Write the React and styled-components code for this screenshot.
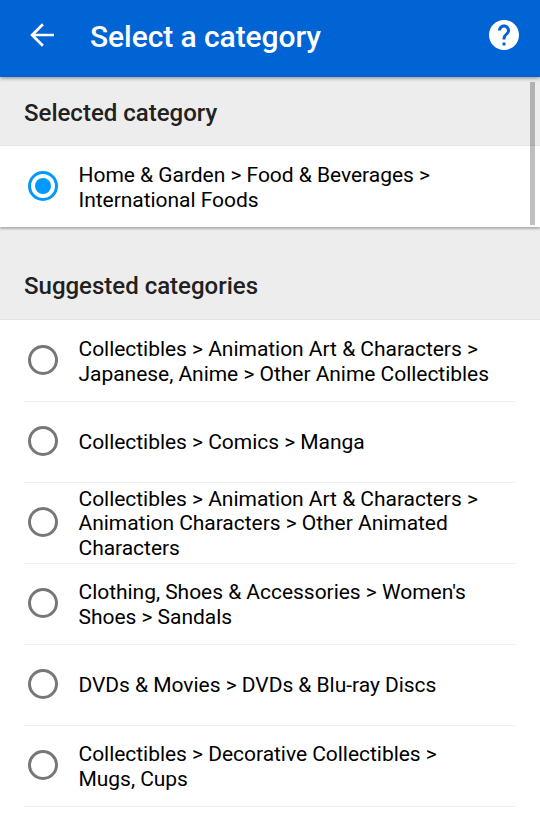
import React from 'react';
import styled, { createGlobalStyle } from 'styled-components';

const Global = createGlobalStyle`
  * { box-sizing: border-box; }
  body { margin: 0; background: #fff; font-family: Roboto, sans-serif; overflow: hidden; }
`;
const Screen = styled.main`
  position: relative;
  width: 540px;
  height: 813px;
  overflow: hidden;
  background: #fff;
  color: #000;
`;
const Header = styled.header`
  position: relative;
  z-index: 1;
  display: flex;
  align-items: center;
  height: 77px;
  padding: 0 18px 7px 28px;
  background: #0064d4;
  color: #fff;
  box-shadow: 0 1px 4px rgba(0, 0, 0, 0.45);
`;
const Title = styled.h1`
  flex: 1;
  margin: 0 0 0 34px;
  padding-top: 3px;
  font-size: 30px;
  font-weight: 500;
  line-height: 36px;
  letter-spacing: -0.08px;
  white-space: nowrap;
`;
const SectionTitle = styled.h2`
  display: flex;
  align-items: flex-end;
  height: ${(p) => (p.$spaced ? 93 : 69)}px;
  margin: 0;
  padding: 0 24px ${(p) => (p.$spaced ? 18 : 17)}px;
  border-bottom: 1px solid #e4e4e4;
  background: #ededed;
  color: #212121;
  font-size: 24px;
  font-weight: 500;
  line-height: 30px;
`;
const List = styled.ul`
  position: relative;
  margin: 0;
  padding: 0 24px;
  list-style: none;
  background: #fff;
  box-shadow: ${(p) => (p.$raised ? '0 2px 2px rgba(0, 0, 0, 0.26)' : 'none')};
`;
const Row = styled.li`
  display: flex;
  align-items: center;
  height: 81px;
  padding: 0 0 1px 3.5px;
  box-shadow: ${(p) => (p.$divided ? '0 1px 0 #f0f0f0' : 'none')};
`;
const Label = styled.span`
  margin-left: 21px;
  padding-top: 3px;
  font-size: 21px;
  line-height: 24.5px;
  letter-spacing: -0.035px;
  white-space: pre;
`;
const Radio = styled.span`
  display: grid;
  place-items: center;
  flex: none;
  width: 30px;
  height: 30px;
  border: 3px solid ${(p) => (p.$checked ? '#0399fa' : '#777')};
  border-radius: 50%;
  &::after {
    content: '';
    width: 16px;
    height: 16px;
    border-radius: 50%;
    background: ${(p) => (p.$checked ? '#0399fa' : 'transparent')};
  }
`;
const Scrollbar = styled.div`
  position: absolute;
  top: 82px;
  right: 5px;
  width: 5px;
  height: 143px;
  background: rgba(0, 0, 0, 0.25);
`;

const suggestions = [
  'Collectibles > Animation Art & Characters >\nJapanese, Anime > Other Anime Collectibles',
  'Collectibles > Comics > Manga',
  'Collectibles > Animation Art & Characters >\nAnimation Characters > Other Animated\nCharacters',
  "Clothing, Shoes & Accessories > Women's\nShoes > Sandals",
  'DVDs & Movies > DVDs & Blu-ray Discs',
  'Collectibles > Decorative Collectibles >\nMugs, Cups',
];

export default function App() {
  return (
    <Screen>
      <Global />
      <Header>
        <svg width="28" height="28" viewBox="0 0 28 28" fill="none" stroke="#fff" strokeWidth="2.7">
          <path d="M26 14H4.5M14.9 3.2L4.1 14l10.8 10.8" />
        </svg>
        <Title>Select a category</Title>
        <svg width="36" height="36" viewBox="0 0 24 24" fill="#fff">
          <path d="M12 2C6.48 2 2 6.48 2 12s4.48 10 10 10 10-4.48 10-10S17.52 2 12 2zm1 17h-2v-2h2v2zm2.07-7.75l-.9.92C13.45 12.9 13 13.5 13 15h-2v-.5c0-1.1.45-2.1 1.17-2.83l1.24-1.26c.37-.36.59-.86.59-1.41 0-1.1-.9-2-2-2s-2 .9-2 2H8c0-2.21 1.79-4 4-4s4 1.79 4 4c0 .88-.36 1.68-.93 2.25z" />
        </svg>
      </Header>
      <SectionTitle>Selected category</SectionTitle>
      <List $raised>
        <Row>
          <Radio $checked />
          <Label>{'Home & Garden > Food & Beverages >\nInternational Foods'}</Label>
        </Row>
      </List>
      <SectionTitle $spaced>Suggested categories</SectionTitle>
      <List>
        {suggestions.map((text) => (
          <Row key={text} $divided>
            <Radio />
            <Label>{text}</Label>
          </Row>
        ))}
      </List>
      <Scrollbar />
    </Screen>
  );
}
